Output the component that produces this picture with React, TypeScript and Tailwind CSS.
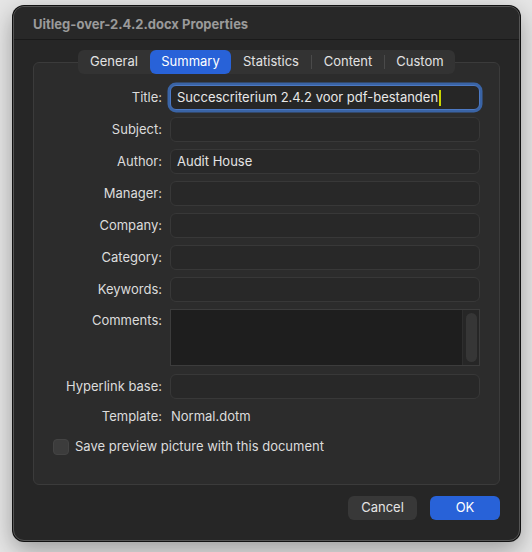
import React from "react";

const font = { fontFamily: "Inter, 'Noto Sans', 'Liberation Sans', sans-serif" };

function Field({ value, focused }: { value?: string; focused?: boolean }) {
  if (focused) {
    return (
      <div className="h-[25px] rounded-[6px] border border-[#4c79c4] bg-[#262626] shadow-[0_0_0_2.5px_#3a64a6] flex items-center pl-[6px] text-[13px] text-[#e8e8e8]">
        <span>{value}</span>
        <span className="ml-[1px] w-[1.5px] h-[16px] bg-[#c9d400]" />
      </div>
    );
  }
  return (
    <div className="h-[25px] rounded-[6px] border border-[#383838] bg-[#282828] flex items-center pl-[6px] text-[13px] text-[#e4e4e4]">
      {value}
    </div>
  );
}

function Label({ children, top }: { children: React.ReactNode; top?: boolean }) {
  return (
    <div
      className={
        "text-right text-[13px] text-[#dcdcdc] " +
        (top ? "pt-[2px] leading-[18px]" : "h-[25px] flex items-center justify-end")
      }
    >
      {children}
    </div>
  );
}

export default function App() {
  const tabs = [
    { name: "General", w: "w-[72px]" },
    { name: "Summary", w: "w-[81px]" },
    { name: "Statistics", w: "w-[80px]" },
    { name: "Content", w: "w-[72px]" },
    { name: "Custom", w: "w-[70px]" },
  ];
  return (
    <div style={font} className="w-[532px] h-[552px] bg-[#e6e6e6] pt-[6px] pl-[13px] overflow-hidden">
      <div className="w-[507px] h-[535px] rounded-[11px] bg-[#262626] border border-[#555] shadow-[0_0_0_1px_#111,0_8px_24px_rgba(0,0,0,0.35)] flex flex-col overflow-hidden">
        {/* title bar */}
        <div className="h-[33px] shrink-0 border-b border-[#1a1a1a] bg-[#282828] flex items-center pl-[19px] pt-[4px]">
          <span className="text-[13px] font-bold text-[#9a9a9a]">Uitleg-over-2.4.2.docx Properties</span>
        </div>

        {/* tabs */}
        <div className="mt-[10px] flex justify-center relative z-10">
          <div className="flex h-[24px] rounded-[6px] bg-[#333333] items-center">
            {tabs.map((t, i) => {
              const sel = t.name === "Summary";
              const showSep = i >= 3;
              return (
                <div key={t.name} className="flex items-center h-full">
                  {showSep && <div className="w-px h-[14px] bg-[#4a4a4a]" />}
                  <div
                    className={
                      t.w +
                      " h-full flex items-center justify-center text-[13px] rounded-[6px] " +
                      (sel ? "bg-[#2862d8] text-white" : "text-[#e2e2e2]")
                    }
                  >
                    {t.name}
                  </div>
                </div>
              );
            })}
          </div>
        </div>

        {/* group box */}
        <div className="-mt-[12px] mx-[19px] h-[423px] rounded-[6px] border border-[#3b3b3b] bg-[#2c2c2c] pt-[22px] pr-[19px] flex flex-col">
          <div className="grid grid-cols-[128px_1fr] gap-x-[8px] gap-y-[7px]">
            <Label>Title:</Label>
            <Field value="Succescriterium 2.4.2 voor pdf-bestanden" focused />
            <Label>Subject:</Label>
            <Field />
            <Label>Author:</Label>
            <Field value="Audit House" />
            <Label>Manager:</Label>
            <Field />
            <Label>Company:</Label>
            <Field />
            <Label>Category:</Label>
            <Field />
            <Label>Keywords:</Label>
            <Field />
            <Label top>Comments:</Label>
            <div className="h-[57px] border border-[#3c3c3c] bg-[#1e1e1e] flex justify-end">
              <div className="w-[17px] h-full bg-[#262626] border-l border-[#2e2e2e] flex justify-center pt-[3px]">
                <div className="w-[11px] h-[49px] rounded-full bg-[#363636]" />
              </div>
            </div>
          </div>
          <div className="grid grid-cols-[128px_1fr] gap-x-[8px] mt-[8px]">
            <Label>Hyperlink base:</Label>
            <Field />
          </div>
          <div className="grid grid-cols-[128px_1fr] gap-x-[9px] mt-[7px] h-[22px] items-center">
            <div className="text-right text-[13px] text-[#dcdcdc]">Template:</div>
            <div className="text-[13px] text-[#dcdcdc]">Normal.dotm</div>
          </div>
          <div className="flex items-center mt-[9px] pl-[19px] gap-[6px]">
            <div className="w-[16px] h-[16px] rounded-[4px] bg-[#3c3c3c] border border-[#444]" />
            <span className="text-[13px] text-[#dcdcdc]">Save preview picture with this document</span>
          </div>
        </div>

        {/* buttons */}
        <div className="flex justify-end gap-[13px] mt-[11px] pr-[19px]">
          <div className="w-[69px] h-[24px] rounded-[6px] bg-[#383838] flex items-center justify-center text-[13px] text-[#e4e4e4]">
            Cancel
          </div>
          <div className="w-[70px] h-[24px] rounded-[6px] bg-[#2862d8] flex items-center justify-center text-[13px] text-white">
            OK
          </div>
        </div>
      </div>
    </div>
  );
}
